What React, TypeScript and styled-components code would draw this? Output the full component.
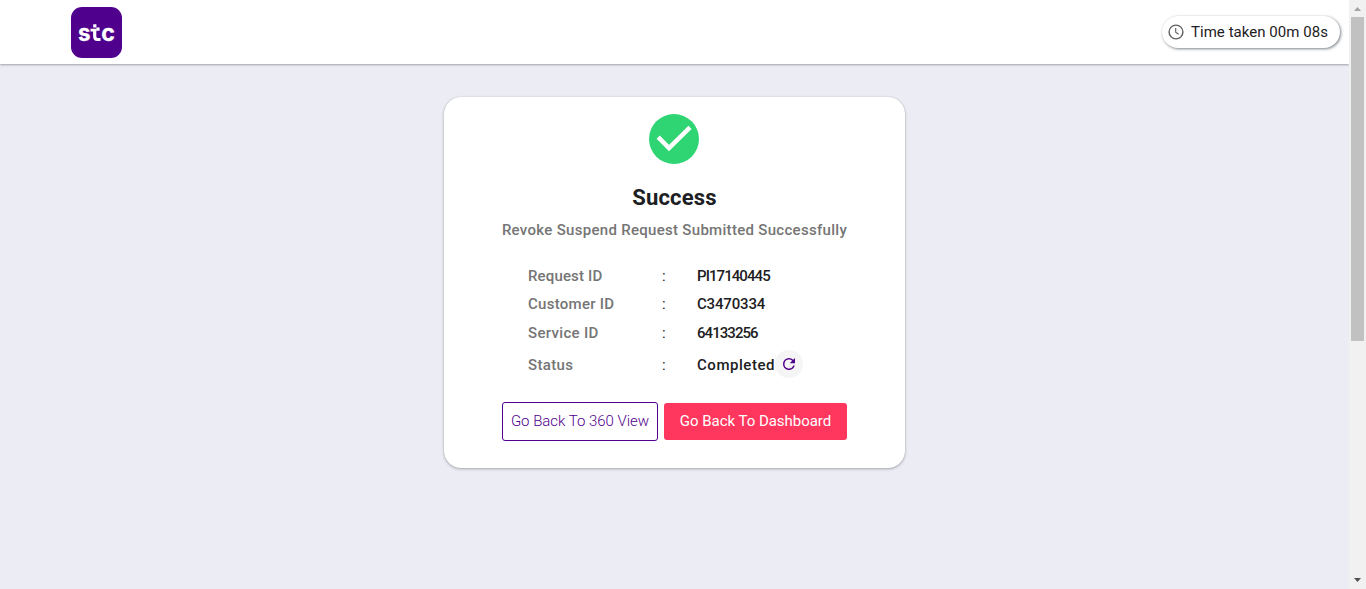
import React from "react";
import styled, { createGlobalStyle } from "styled-components";

const Global = createGlobalStyle`
  * { box-sizing: border-box; }
  body { margin: 0; overflow: hidden; background: #ececf5; font-family: Roboto, "Liberation Sans", sans-serif; }
`;

const Screen = styled.div`
  display: flex;
  width: 100vw;
  height: 589px;
`;

const Page = styled.div`
  flex: 1;
  min-width: 0;
  display: flex;
  flex-direction: column;
  align-items: center;
  background: #ececf5;
`;

const Header = styled.header`
  width: 100%;
  height: 64px;
  flex: none;
  display: flex;
  align-items: center;
  justify-content: space-between;
  padding: 0 9px 0 71px;
  background: #fff;
  box-shadow: 0 1px 2px rgba(0, 0, 0, 0.32);
`;

const Logo = styled.svg`
  display: block;
  width: 51px;
  height: 51px;
  margin-top: 1px;
`;

const Timer = styled.div`
  display: flex;
  align-items: center;
  width: 178px;
  height: 32px;
  padding-left: 6px;
  border-radius: 16px;
  background: #fff;
  box-shadow: 1px 1px 3px rgba(40, 50, 60, 0.6), 0 0 1px rgba(0, 0, 0, 0.1);
  svg { display: block; margin-right: 7px; }
`;

const Label = styled.span<{ $size?: number; $weight?: number; $spacing?: number; $color?: string }>`
  font-size: ${(p) => p.$size ?? 15}px;
  font-weight: ${(p) => p.$weight ?? 500};
  letter-spacing: ${(p) => p.$spacing ?? 0}px;
  color: ${(p) => p.$color ?? "#1d2023"};
  line-height: 20px;
  white-space: nowrap;
`;

const Message = styled(Label)`
  margin-top: 12px;
`;

const Card = styled.main`
  display: flex;
  flex-direction: column;
  align-items: center;
  width: 461px;
  height: 371px;
  margin: 33px 0 0 0;
  padding-top: 17px;
  border-radius: 17px;
  background: #fff;
  box-shadow: 0 1px 3px rgba(0, 0, 0, 0.3), 0 0 1px rgba(0, 0, 0, 0.15);
`;

const Check = styled.svg`
  display: block;
  width: 50px;
  height: 50px;
  margin: 0 1px 24px 0;
  flex: none;
`;

const Details = styled.div`
  display: grid;
  grid-template-columns: 133px 36px 150px;
  grid-template-rows: 28px 28px 29px 36px;
  align-items: center;
  width: 319px;
  margin: 22px 0 0 26px;
`;

const Colon = styled(Label)`
  padding-left: 1px;
`;

const Status = styled.div`
  display: flex;
  align-items: center;
`;

const Refresh = styled.button`
  display: flex;
  align-items: center;
  justify-content: center;
  width: 28px;
  height: 28px;
  margin-top: -2px;
  padding: 0;
  border: 0;
  border-radius: 50%;
  background: #f5f5f5;
`;

const Actions = styled.div`
  display: flex;
  align-items: center;
  gap: 6px;
  margin-top: 19px;
`;

const Button = styled.button<{ $primary?: boolean }>`
  display: flex;
  align-items: center;
  justify-content: center;
  width: ${(p) => (p.$primary ? 183 : 156)}px;
  height: ${(p) => (p.$primary ? 37 : 39)}px;
  padding: 0 0 1px;
  font-family: inherit;
  border: ${(p) => (p.$primary ? "0" : "1px solid #4f008c")};
  border-radius: 3px;
  background: ${(p) => (p.$primary ? "#ff375e" : "#fff")};
`;

const Scrollbar = styled.div`
  width: 17px;
  display: flex;
  flex-direction: column;
  align-items: center;
  background: #f1f1f1;
  svg { display: block; flex: none; }
`;

const Thumb = styled.div`
  width: 13px;
  height: 324px;
  margin-bottom: auto;
  background: #c1c1c1;
`;

const rows = [
  ["Request ID", "PI17140445", 0.15, -0.93],
  ["Customer ID", "C3470334", 0.28, -0.17],
  ["Service ID", "64133256", 0.32, -0.95],
] as const;

export default function App() {
  return (
    <Screen>
      <Global />
      <Page>
        <Header>
          <Logo viewBox="0 0 51 51">
            <rect width="51" height="51" rx="11" fill="#4f008c" />
            <g fill="#fff" stroke="#fff" strokeWidth="0.3" fontFamily="Inter, sans-serif" fontWeight="700" fontSize="23.5">
              <text x="7" y="34" textLength="12.5" lengthAdjust="spacingAndGlyphs">s</text>
              <text x="30.3" y="34" textLength="13.6" lengthAdjust="spacingAndGlyphs">c</text>
            </g>
            <path d="M23.7 24V29.2Q23.7 32.5 26.5 32.5H29.5" fill="none" stroke="#fff" strokeWidth="3.2" />
            <path d="M22.2 17.3H25.4V20.6H22.2ZM25.4 20.6H28.6V23.7H25.4ZM19.5 21.8H25.3V24.6H19.5Z" fill="#fff" />
          </Logo>
          <Timer>
            <svg width="16" height="16" viewBox="0 0 16 16" fill="none" stroke="#5d5d5d" strokeWidth="1.4">
              <circle cx="8" cy="8" r="6.9" />
              <path d="M7.7 4V8.3L10.6 10.2" strokeWidth="1.1" />
            </svg>
            <Label $weight={450} $spacing={0.04}>Time taken 00m 08s</Label>
          </Timer>
        </Header>
        <Card>
          <Check viewBox="0 0 50 50">
            <circle cx="25" cy="25" r="25" fill="#2fd573" />
            <path d="M9.2 23.2L20 34L41 13.3" fill="none" stroke="#fff" strokeWidth="4.5" />
          </Check>
          <Label $size={22} $weight={700} $spacing={0.15}>Success</Label>
          <Message $color="#757575" $spacing={0.3}>Revoke Suspend Request Submitted Successfully</Message>
          <Details>
            {rows.map(([name, value, nameSpacing, valueSpacing]) => (
              <React.Fragment key={name}>
                <Label $color="#757575" $spacing={nameSpacing}>{name}</Label>
                <Colon $weight={400}>:</Colon>
                <Label $spacing={valueSpacing}>{value}</Label>
              </React.Fragment>
            ))}
            <Label $color="#757575" $spacing={0.35}>Status</Label>
            <Colon $weight={400}>:</Colon>
            <Status>
              <Label $spacing={0.55}>Completed</Label>
              <Refresh aria-label="Refresh">
                <svg width="18" height="18" viewBox="0 0 24 24" fill="#4f008c">
                  <path d="M17.65 6.35A7.96 7.96 0 0 0 12 4a8 8 0 1 0 7.73 10h-2.08A6 6 0 1 1 12 6c1.66 0 3.14.69 4.22 1.78L13 11h7V4z" />
                </svg>
              </Refresh>
            </Status>
          </Details>
          <Actions>
            <Button><Label $weight={300} $color="#4f008c" $spacing={-0.02}>Go Back To 360 View</Label></Button>
            <Button $primary><Label $weight={450} $color="#fff" $spacing={-0.03}>Go Back To Dashboard</Label></Button>
          </Actions>
        </Card>
      </Page>
      <Scrollbar>
        <svg width="17" height="17" viewBox="0 0 17 17"><path d="M5 11L8.5 7L12 11Z" fill="#a3a3a3" /></svg>
        <Thumb />
        <svg width="17" height="17" viewBox="0 0 17 17"><path d="M5 6L8.5 10L12 6Z" fill="#505050" /></svg>
      </Scrollbar>
    </Screen>
  );
}
